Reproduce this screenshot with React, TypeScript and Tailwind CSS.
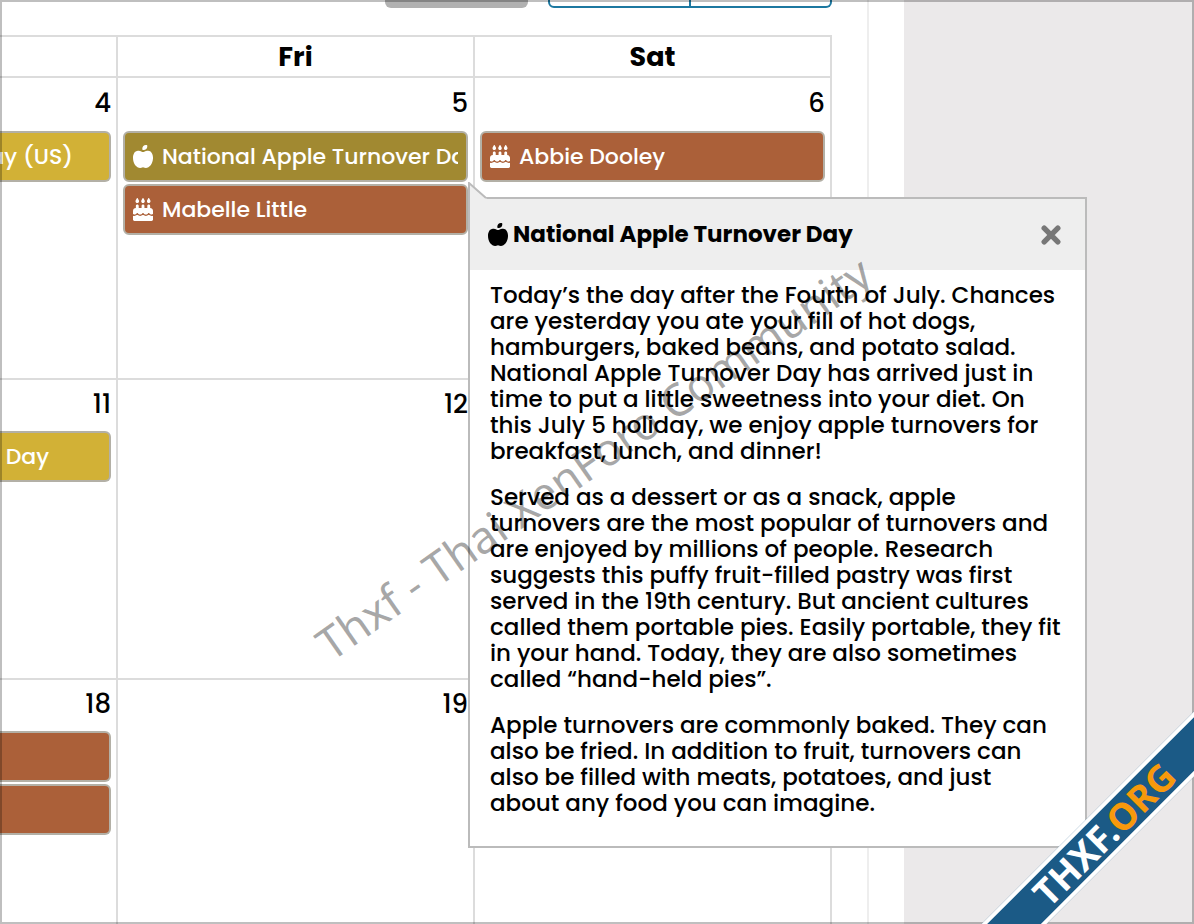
import type { ReactNode } from 'react';
import { FaAppleWhole, FaCakeCandles } from 'react-icons/fa6';

interface ICalendarEvent {
  title: string;
  label?: string;
  kind: 'holiday' | 'active' | 'birthday';
  clipped?: boolean;
  inset?: string;
}

const eventColors = {
  holiday: 'bg-[#d2b136]',
  active: 'bg-[#a18931]',
  birthday: 'bg-[#ab6039]',
};

const description = [
  `Today’s the day after the Fourth of July. Chances
are yesterday you ate your fill of hot dogs,
hamburgers, baked beans, and potato salad.
National Apple Turnover Day has arrived just in
time to put a little sweetness into your diet. On
this July 5 holiday, we enjoy apple turnovers for
breakfast, lunch, and dinner!`,
  `Served as a dessert or as a snack, apple
turnovers are the most popular of turnovers and
are enjoyed by millions of people. Research
suggests this puffy fruit-filled pastry was first
served in the 19th century. But ancient cultures
called them portable pies. Easily portable, they fit
in your hand. Today, they are also sometimes
called “hand-held pies”.`,
  `Apple turnovers are commonly baked. They can
also be fried. In addition to fruit, turnovers can
also be filled with meats, potatoes, and just
about any food you can imagine.`,
];

function EventBar({ title, label, kind, clipped, inset }: ICalendarEvent) {
  return (
    <a
      href="#event"
      aria-label={label}
      className={`flex h-[51px] items-center overflow-hidden rounded-md border-2 border-[#b3b0a6] text-[22px] whitespace-nowrap text-white ${
        eventColors[kind]
      } ${clipped ? '-ml-[5px] justify-end rounded-l-none border-l-0' : 'px-2'} ${inset ?? ''}`}
    >
      {clipped ? (
        <span className="shrink-0">{title}</span>
      ) : (
        <>
          <span className="mr-[9px] shrink-0">
            {kind === 'active' ? <FaAppleWhole className="h-[23px] w-5" /> : <FaCakeCandles className="h-[23px] w-5" />}
          </span>
          <span className="overflow-hidden">{title}</span>
        </>
      )}
    </a>
  );
}

function DayCell({ day, children }: { day?: number; children?: ReactNode }) {
  return (
    <td className="h-[300px] border-t-2 border-r-2 border-[#dcdcdc] p-0 px-[5px] align-top group-first:border-t-0">
      <div className="flex h-[51px] items-center justify-end pb-[2px] text-[26px] group-first:h-[53px]">{day}</div>
      <div className="flex flex-col gap-[2px]">{children}</div>
    </td>
  );
}

function EventPopover() {
  return (
    <section
      aria-label="National Apple Turnover Day"
      className="absolute top-full left-full z-20 mt-[15px] w-[619px] border-2 border-[#bbbbbb] bg-white pb-[30px]"
    >
      <svg className="absolute -top-[17px] -left-[2px] h-[18px] w-[20px]" viewBox="0 0 20 18" aria-hidden="true">
        <path d="M1 1V18H20Z" fill="#efefef" />
        <path d="M1 18V1L18 16" fill="none" stroke="#bbbbbb" strokeWidth="2" />
      </svg>
      <header className="flex h-[71px] items-center justify-between bg-[#eeeeee] pr-6 pl-[18px]">
        <h2 className="flex items-center gap-[5px] text-[23px] font-bold">
          <FaAppleWhole className="h-[23px] w-5" />
          National Apple Turnover Day
        </h2>
        <button type="button" aria-label="Close" className="text-[#777777]">
          <svg className="size-5" viewBox="0 0 20 20" fill="none" aria-hidden="true">
            <path d="M3.2 3.2L16.8 16.8M16.8 3.2L3.2 16.8" stroke="currentColor" strokeWidth="5.4" strokeLinecap="round" />
          </svg>
        </button>
      </header>
      <div className="flex flex-col gap-5 px-5 pt-3 text-[23px] leading-[26px]">
        {description.map((text) => (
          <p key={text} className="whitespace-pre">
            {text}
          </p>
        ))}
      </div>
    </section>
  );
}

function Toolbar() {
  return (
    <div className="-mt-10 mb-[27px] flex justify-end gap-5">
      <button type="button" aria-label="Today" className="h-12 w-[143px] rounded-md bg-[#b1b1b1]" />
      <div className="flex">
        <button
          type="button"
          aria-label="Previous"
          className="h-12 w-[143px] rounded-l-md border-2 border-[#1c78a0] bg-white"
        />
        <button
          type="button"
          aria-label="Next"
          className="h-12 w-[141px] rounded-r-md border-2 border-l-0 border-[#1c78a0] bg-white"
        />
      </div>
    </div>
  );
}

function Calendar() {
  return (
    <table className="w-full table-fixed border-separate border-spacing-0">
      <colgroup>
        <col className="w-[118px]" />
        <col />
        <col />
      </colgroup>
      <thead>
        <tr className="h-[43px] text-[27px]">
          {['', 'Fri', 'Sat'].map((name) => (
            <th key={name} scope="col" className="border-y-2 border-r-2 border-[#dcdcdc] p-0 leading-8 font-bold">
              {name}
            </th>
          ))}
        </tr>
      </thead>
      <tbody>
        <tr className="group">
          <DayCell day={4}>
            <EventBar title="Day (US)" kind="holiday" clipped inset="pr-9" />
          </DayCell>
          <DayCell day={5}>
            <div className="relative">
              <EventBar title="National Apple Turnover Day" kind="active" />
              <EventPopover />
            </div>
            <EventBar title="Mabelle Little" kind="birthday" />
          </DayCell>
          <DayCell day={6}>
            <EventBar title="Abbie Dooley" kind="birthday" />
          </DayCell>
        </tr>
        <tr className="group">
          <DayCell day={11}>
            <EventBar title="Day" kind="holiday" clipped inset="pr-15" />
          </DayCell>
          <DayCell day={12} />
          <DayCell />
        </tr>
        <tr className="group">
          <DayCell day={18}>
            <EventBar title="" label="Birthday" kind="birthday" clipped />
            <EventBar title="" label="Birthday" kind="birthday" clipped />
          </DayCell>
          <DayCell day={19} />
          <DayCell />
        </tr>
      </tbody>
    </table>
  );
}

function App() {
  return (
    <div className="relative flex h-screen overflow-hidden bg-white font-['Poppins','Inter',sans-serif] font-medium text-black">
      <main className="min-w-0 flex-1 border-r-2 border-[#eeeeee] pr-[35px]">
        <Toolbar />
        <Calendar />
      </main>
      <aside className="ml-[35px] w-[290px] shrink-0 bg-[#ebe9ea]" />

      <div className="pointer-events-none absolute inset-0 z-30 flex items-center justify-center pr-2 pb-2">
        <span className="-rotate-35 font-['Noto_Sans',sans-serif] text-[45px] font-normal whitespace-nowrap text-black/35">
          Thxf - Thai XenForo Community
        </span>
      </div>
      <div className="pointer-events-none absolute inset-0 z-30 border-2 border-black/25" />
      <div className="absolute -right-[110px] bottom-[67px] z-40 flex h-[46px] w-[400px] -rotate-45 items-center justify-center border-4 border-white bg-[#1b5a86] font-['Noto_Sans',sans-serif] text-[37px] font-bold text-white">
        THXF.<span className="text-[#f7990c]">ORG</span>
      </div>
    </div>
  );
}

export default App;
